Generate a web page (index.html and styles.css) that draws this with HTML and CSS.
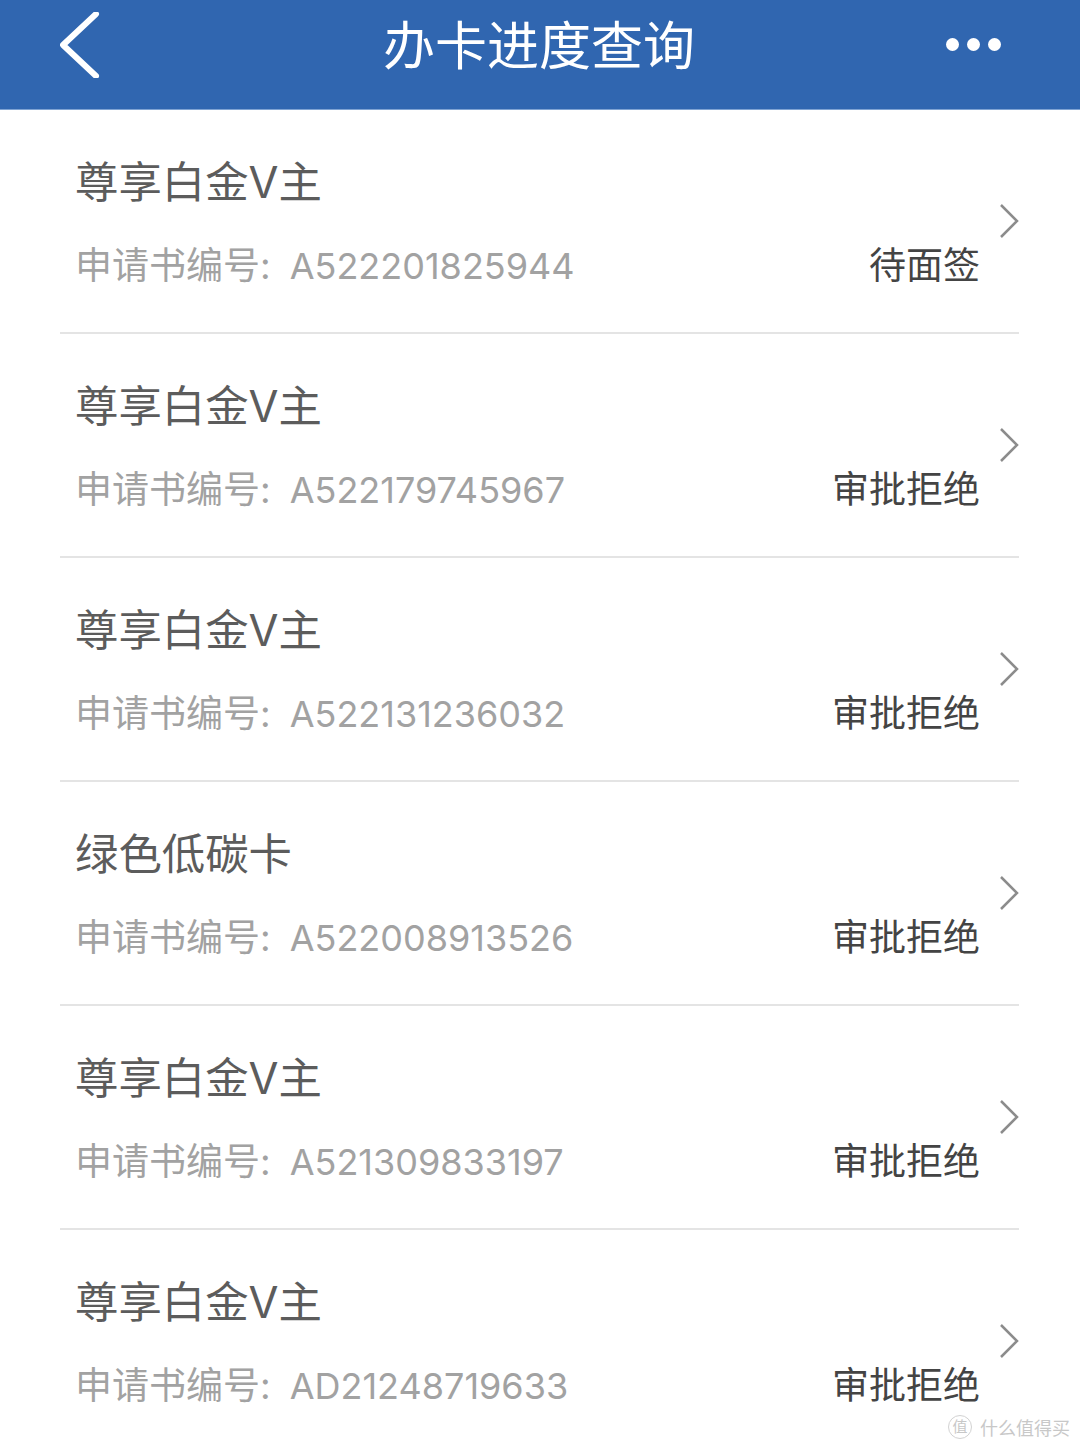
FILE: index.html
```html
<!DOCTYPE html>
<html lang="zh-CN">
<head>
    <meta charset="UTF-8">
    <meta name="viewport" content="width=device-width, initial-scale=1.0">
    <title>办卡进度查询</title>
    <link rel="stylesheet" href="styles.css">
</head>
<body>
    <header class="topbar">
        <svg class="back" width="40" height="66" viewBox="0 0 40 66"><path d="M36 2 L3 33 L36 64" /></svg>
        <h1>办卡进度查询</h1>
        <div class="dots"><span></span><span></span><span></span></div>
    </header>

    <ul class="list">
        <li class="row">
            <div class="info">
                <div class="name">尊享白金V主</div>
                <div class="line"><span class="no">申请书编号:<span class="code">A522201825944</span></span><span class="status">待面签</span></div>
            </div>
            <svg class="arrow" width="20" height="36" viewBox="0 0 20 36"><path d="M2 2 L18 18 L2 34" /></svg>
        </li>
        <li class="row">
            <div class="info">
                <div class="name">尊享白金V主</div>
                <div class="line"><span class="no">申请书编号:<span class="code">A522179745967</span></span><span class="status">审批拒绝</span></div>
            </div>
            <svg class="arrow" width="20" height="36" viewBox="0 0 20 36"><path d="M2 2 L18 18 L2 34" /></svg>
        </li>
        <li class="row">
            <div class="info">
                <div class="name">尊享白金V主</div>
                <div class="line"><span class="no">申请书编号:<span class="code">A522131236032</span></span><span class="status">审批拒绝</span></div>
            </div>
            <svg class="arrow" width="20" height="36" viewBox="0 0 20 36"><path d="M2 2 L18 18 L2 34" /></svg>
        </li>
        <li class="row">
            <div class="info">
                <div class="name">绿色低碳卡</div>
                <div class="line"><span class="no">申请书编号:<span class="code">A522008913526</span></span><span class="status">审批拒绝</span></div>
            </div>
            <svg class="arrow" width="20" height="36" viewBox="0 0 20 36"><path d="M2 2 L18 18 L2 34" /></svg>
        </li>
        <li class="row">
            <div class="info">
                <div class="name">尊享白金V主</div>
                <div class="line"><span class="no">申请书编号:<span class="code">A521309833197</span></span><span class="status">审批拒绝</span></div>
            </div>
            <svg class="arrow" width="20" height="36" viewBox="0 0 20 36"><path d="M2 2 L18 18 L2 34" /></svg>
        </li>
        <li class="row">
            <div class="info">
                <div class="name">尊享白金V主</div>
                <div class="line"><span class="no">申请书编号:<span class="code">AD21248719633</span></span><span class="status">审批拒绝</span></div>
            </div>
            <svg class="arrow" width="20" height="36" viewBox="0 0 20 36"><path d="M2 2 L18 18 L2 34" /></svg>
        </li>
    </ul>

    <div class="mark">
        <span class="mark-icon">值</span>
        <span>什么值得买</span>
    </div>
</body>
</html>
```

FILE: styles.css
```css
html, body {
    margin: 0;
    padding: 0;
}

body {
    position: relative;
    width: 1080px;
    height: 1450px;
    overflow: hidden;
    background-color: #fff;
    font-family: "Inter", "Noto Sans CJK SC", sans-serif;
}

.topbar {
    display: grid;
    grid-template-columns: 1fr auto 1fr;
    align-items: center;
    height: 110px;
    padding: 0 78px 20px;
    box-sizing: border-box;
    background-color: #3066b0;
    border-bottom: 1px solid #7fa3d3;
    color: #fff;
}

.topbar h1 {
    margin: 0 0 0 -2px;
    font-size: 52px;
    font-weight: 400;
    line-height: 60px;
    padding-top: 4px;
}

.back {
    margin: 1px 0 0 -18px;
    fill: none;
    stroke: #fff;
    stroke-width: 6;
    stroke-linecap: round;
    stroke-linejoin: round;
}

.dots {
    display: flex;
    justify-content: flex-end;
    gap: 8px;
    margin: -1px 1px 0 0;
}

.dots span {
    width: 13px;
    height: 13px;
    border-radius: 50%;
    background-color: #fff;
}

.list {
    margin: 0 61px 0 60px;
    padding: 0;
    list-style: none;
}

.row {
    display: flex;
    height: 224px;
    box-sizing: border-box;
    border-bottom: 2px solid #e4e4e4;
}

.info {
    flex: 1;
    padding: 47px 19px 0 15px;
}

.name {
    font-size: 43.4px;
    line-height: 50px;
    color: #5c5c5c;
}

.line {
    display: flex;
    justify-content: space-between;
    margin-top: 34px;
    line-height: 50px;
}

.no {
    font-size: 37px;
    color: #a2a2a2;
}

.code {
    margin-left: 19px;
    font-size: 36px;
}

.status {
    font-size: 37px;
    color: #444;
}

.arrow {
    margin-top: 93px;
    flex: none;
    fill: none;
    stroke: #8c8c8c;
    stroke-width: 2.5;
}

.mark {
    position: absolute;
    right: 10px;
    bottom: 10px;
    display: flex;
    align-items: center;
    gap: 8px;
    font-size: 18px;
    color: #c8c8c8;
}

.mark-icon {
    width: 22px;
    height: 22px;
    border: 1px solid #d2d2d2;
    border-radius: 50%;
    font-size: 15px;
    line-height: 22px;
    text-align: center;
}
```
